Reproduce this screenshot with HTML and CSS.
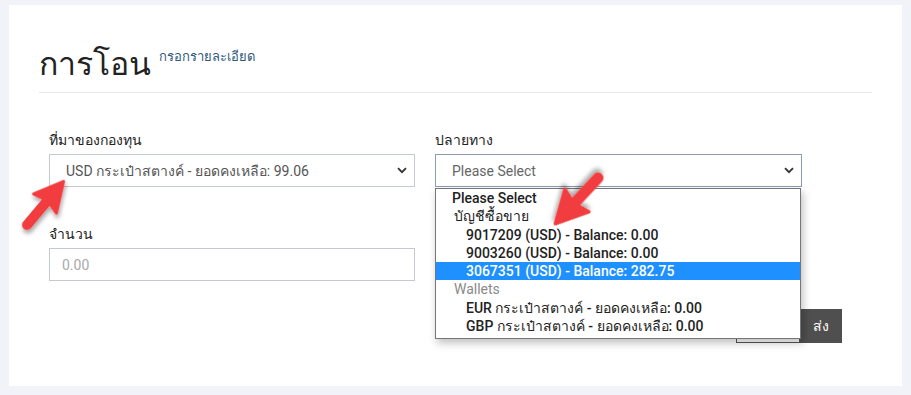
FILE: index.html
```html
<!DOCTYPE html>
<html lang="th">
<head>
    <meta charset="UTF-8">
    <title>การโอน</title>
    <link rel="stylesheet" href="styles.css">
</head>
<body>
    <div class="card">
        <div class="page-head">
            <h1>การโอน</h1>
            <small>กรอกรายละเอียด</small>
        </div>

        <div class="form-grid">
            <div class="field">
                <label>ที่มาของกองทุน</label>
                <div class="select">
                    <span>USD กระเป๋าสตางค์ - ยอดคงเหลือ: 99.06</span>
                    <svg class="chev" width="10" height="7" viewBox="0 0 10 7"><path d="M1 1.2l4 4 4-4" fill="none" stroke="#333" stroke-width="1.8"/></svg>
                </div>
            </div>
            <div class="field dest">
                <label>ปลายทาง</label>
                <div class="select open">
                    <span>Please Select</span>
                    <svg class="chev" width="10" height="7" viewBox="0 0 10 7"><path d="M1 1.2l4 4 4-4" fill="none" stroke="#333" stroke-width="1.8"/></svg>
                </div>
                <ul class="options">
                    <li class="opt first">Please Select</li>
                    <li class="group">บัญชีซื้อขาย</li>
                    <li class="opt sub">9017209 (USD) - Balance: 0.00</li>
                    <li class="opt sub">9003260 (USD) - Balance: 0.00</li>
                    <li class="opt sub active">3067351 (USD) - Balance: 282.75</li>
                    <li class="group muted">Wallets</li>
                    <li class="opt sub">EUR กระเป๋าสตางค์ - ยอดคงเหลือ: 0.00</li>
                    <li class="opt sub">GBP กระเป๋าสตางค์ - ยอดคงเหลือ: 0.00</li>
                </ul>
            </div>
            <div class="field">
                <label>จำนวน</label>
                <input type="text" placeholder="0.00">
            </div>
        </div>

        <div class="actions">
            <button class="btn-light">ล้าง</button>
            <button class="btn-dark">ส่ง</button>
        </div>
    </div>

    <svg class="arrows" width="911" height="395" viewBox="0 0 911 395">
        <defs>
            <filter id="shadow" x="-30%" y="-30%" width="160%" height="160%">
                <feDropShadow dx="-2" dy="3" stdDeviation="2" flood-color="#000" flood-opacity="0.35"/>
            </filter>
            <g id="arrow">
                <line x1="0" y1="0" x2="34" y2="0" stroke="#f23c3f" stroke-width="10" stroke-linecap="round"/>
                <polygon points="28,-15 57,0 28,15 32,0" fill="#f23c3f" stroke="#f23c3f" stroke-width="3" stroke-linejoin="round"/>
            </g>
        </defs>
        <use href="#arrow" transform="translate(27 225) rotate(-50)" filter="url(#shadow)"/>
        <use href="#arrow" transform="translate(598 178) rotate(133) scale(1.1)" filter="url(#shadow)"/>
    </svg>
</body>
</html>
```

FILE: styles.css
```css
body {
    margin: 0;
    padding: 5px 9px 9px;
    background: #f2f3f8;
    font-family: Roboto, "Noto Sans", "DejaVu Sans", sans-serif;
    color: #333;
}

.card {
    position: relative;
    background: #fff;
    height: 381px;
    box-sizing: border-box;
    padding: 0 30px;
}

.page-head {
    display: flex;
    align-items: flex-start;
    padding-top: 38px;
    padding-bottom: 7px;
    border-bottom: 1px solid #e8e9ee;
}
.page-head h1 {
    margin: 0;
    font-size: 32px;
    font-weight: 400;
    line-height: 42px;
    color: #222;
}
.page-head small {
    font-size: 13px;
    color: #2f5a7e;
    margin: 3px 0 0 8px;
}

.form-grid {
    display: grid;
    grid-template-columns: 366px 367px;
    column-gap: 20px;
    row-gap: 37px;
    padding: 37px 0 0 10px;
}
.field { position: relative; }
.field label {
    display: block;
    font-size: 14px;
    line-height: 20px;
    margin-bottom: 4px;
    color: #222;
}
.select, .field input {
    box-sizing: border-box;
    width: 100%;
    height: 33px;
    border: 1px solid #c4c8d0;
    font: 14px Roboto, "Noto Sans", sans-serif;
    color: #555;
}
.select {
    display: flex;
    align-items: center;
    justify-content: space-between;
    padding: 0 7px 0 16px;
}
.select.open { border-color: #8d9bb5; color: #666; }
.field input { padding: 0 12px; outline: none; }
.field input::placeholder { color: #a9a9a9; }

.options {
    position: absolute;
    left: 0;
    top: 58px;
    width: 366px;
    box-sizing: border-box;
    margin: 0;
    padding: 0 0 3px;
    list-style: none;
    background: #fff;
    border: 1px solid #767676;
    box-shadow: 2px 4px 8px rgba(0,0,0,0.25);
    z-index: 2;
    font-size: 14px;
    line-height: 18.3px;
}
.options .opt { font-weight: 500; color: #222; padding-left: 16px; }
.options .group { padding-left: 18px; color: #222; }
.options .muted { color: #8a8a8a; }
.options .sub { padding-left: 30px; }
.options .active { background: #1e90ff; color: #fff; }

.actions {
    display: flex;
    justify-content: flex-end;
    margin: 28px 30px 0 0;
}
.actions button {
    height: 34px;
    border: 0;
    font: 14px Roboto, "Noto Sans", sans-serif;
}
.btn-light {
    width: 64px;
    background: #fff;
    border: 1px solid #555 !important;
    color: #333;
}
.btn-dark {
    width: 42px;
    background: #4f4f4f;
    color: #fff;
}

.arrows {
    position: absolute;
    top: 0;
    left: 0;
    pointer-events: none;
    z-index: 5;
}
```
